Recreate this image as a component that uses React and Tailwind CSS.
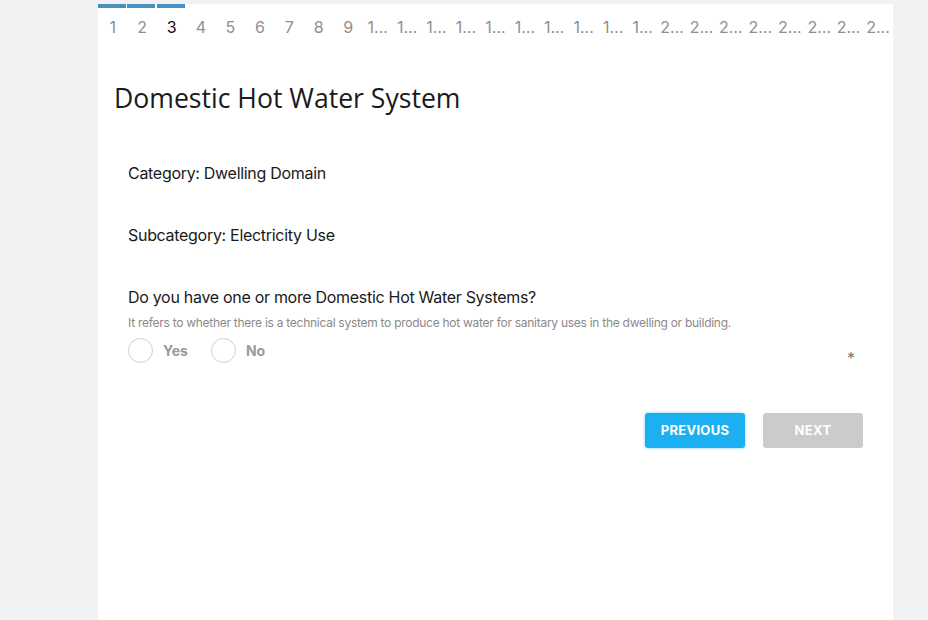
import React from "react";

const tabs = [
  "1","2","3","4","5","6","7","8","9",
  "1…","1…","1…","1…","1…","1…","1…","1…","1…","1…",
  "2…","2…","2…","2…","2…","2…","2…","2…",
];

export default function App() {
  return (
    <div className="min-h-[620px] w-[928px] bg-[#f1f2f4] pt-[4px] overflow-hidden" style={{ fontFamily: "Inter, 'Liberation Sans', sans-serif" }}>
      <div className="ml-[98px] w-[795px] min-h-[616px] bg-white">
        <div className="flex">
          {tabs.map((t, i) => (
            <div key={i} className="flex-1 flex flex-col min-w-0">
              <div className={i < 3 ? "h-[4px] mr-[1.5px] bg-[#4a8fc1]" : "h-[4px]"} />
              <div className={"pt-[9px] text-center text-[16px] leading-[20px] whitespace-nowrap " + (i === 2 ? "text-[#111]" : "text-[#8f8f8f]")}>{t}</div>
            </div>
          ))}
        </div>
        <h1 className="ml-[16px] mt-[45px] text-[26.6px] leading-[32px] text-[#1a1a1a]" style={{ fontFamily: "'Open Sans', sans-serif" }}>
          Domestic Hot Water System
        </h1>
        <div className="px-[30px]">
          <div className="mt-[47px] text-[16px] leading-[24px] tracking-[-0.3px] text-[#1a1a1a]">Category: Dwelling Domain</div>
          <div className="mt-[38px] text-[16px] leading-[24px] tracking-[-0.3px] text-[#1a1a1a]">Subcategory: Electricity Use</div>
          <div className="mt-[38px] text-[16px] leading-[24px] tracking-[-0.3px] text-[#1a1a1a]">Do you have one or more Domestic Hot Water Systems?</div>
          <div className="mt-[6px] text-[12px] leading-[16px] tracking-[-0.27px] text-[#8a8a8a]">It refers to whether there is a technical system to produce hot water for sanitary uses in the dwelling or building.</div>
          <div className="mt-[7px] flex items-start justify-between">
            <div className="flex items-center">
              <div className="flex items-center">
                <span className="w-[25px] h-[25px] rounded-full border border-[#d0d0d0] bg-white" />
                <span className="ml-[10px] text-[14px] font-bold text-[#9a9a9a]">Yes</span>
              </div>
              <div className="flex items-center ml-[23px]">
                <span className="w-[25px] h-[25px] rounded-full border border-[#d0d0d0] bg-white" />
                <span className="ml-[10px] text-[14px] font-bold text-[#9a9a9a]">No</span>
              </div>
            </div>
            <span className="mt-[10px] mr-[8px] text-[16px] leading-[20px] text-[#777]">*</span>
          </div>
          <div className="mt-[45px] flex justify-end gap-[18px]">
            <button className="w-[100px] h-[35px] rounded-[3px] bg-[#1cb0f2] text-white text-[13px] font-bold tracking-[0.3px] shadow-[0_0_3px_rgba(28,176,242,0.6)]">PREVIOUS</button>
            <button className="w-[100px] h-[35px] rounded-[3px] bg-[#cbcbcb] text-white text-[13px] font-bold tracking-[0.3px]">NEXT</button>
          </div>
        </div>
      </div>
    </div>
  );
}
